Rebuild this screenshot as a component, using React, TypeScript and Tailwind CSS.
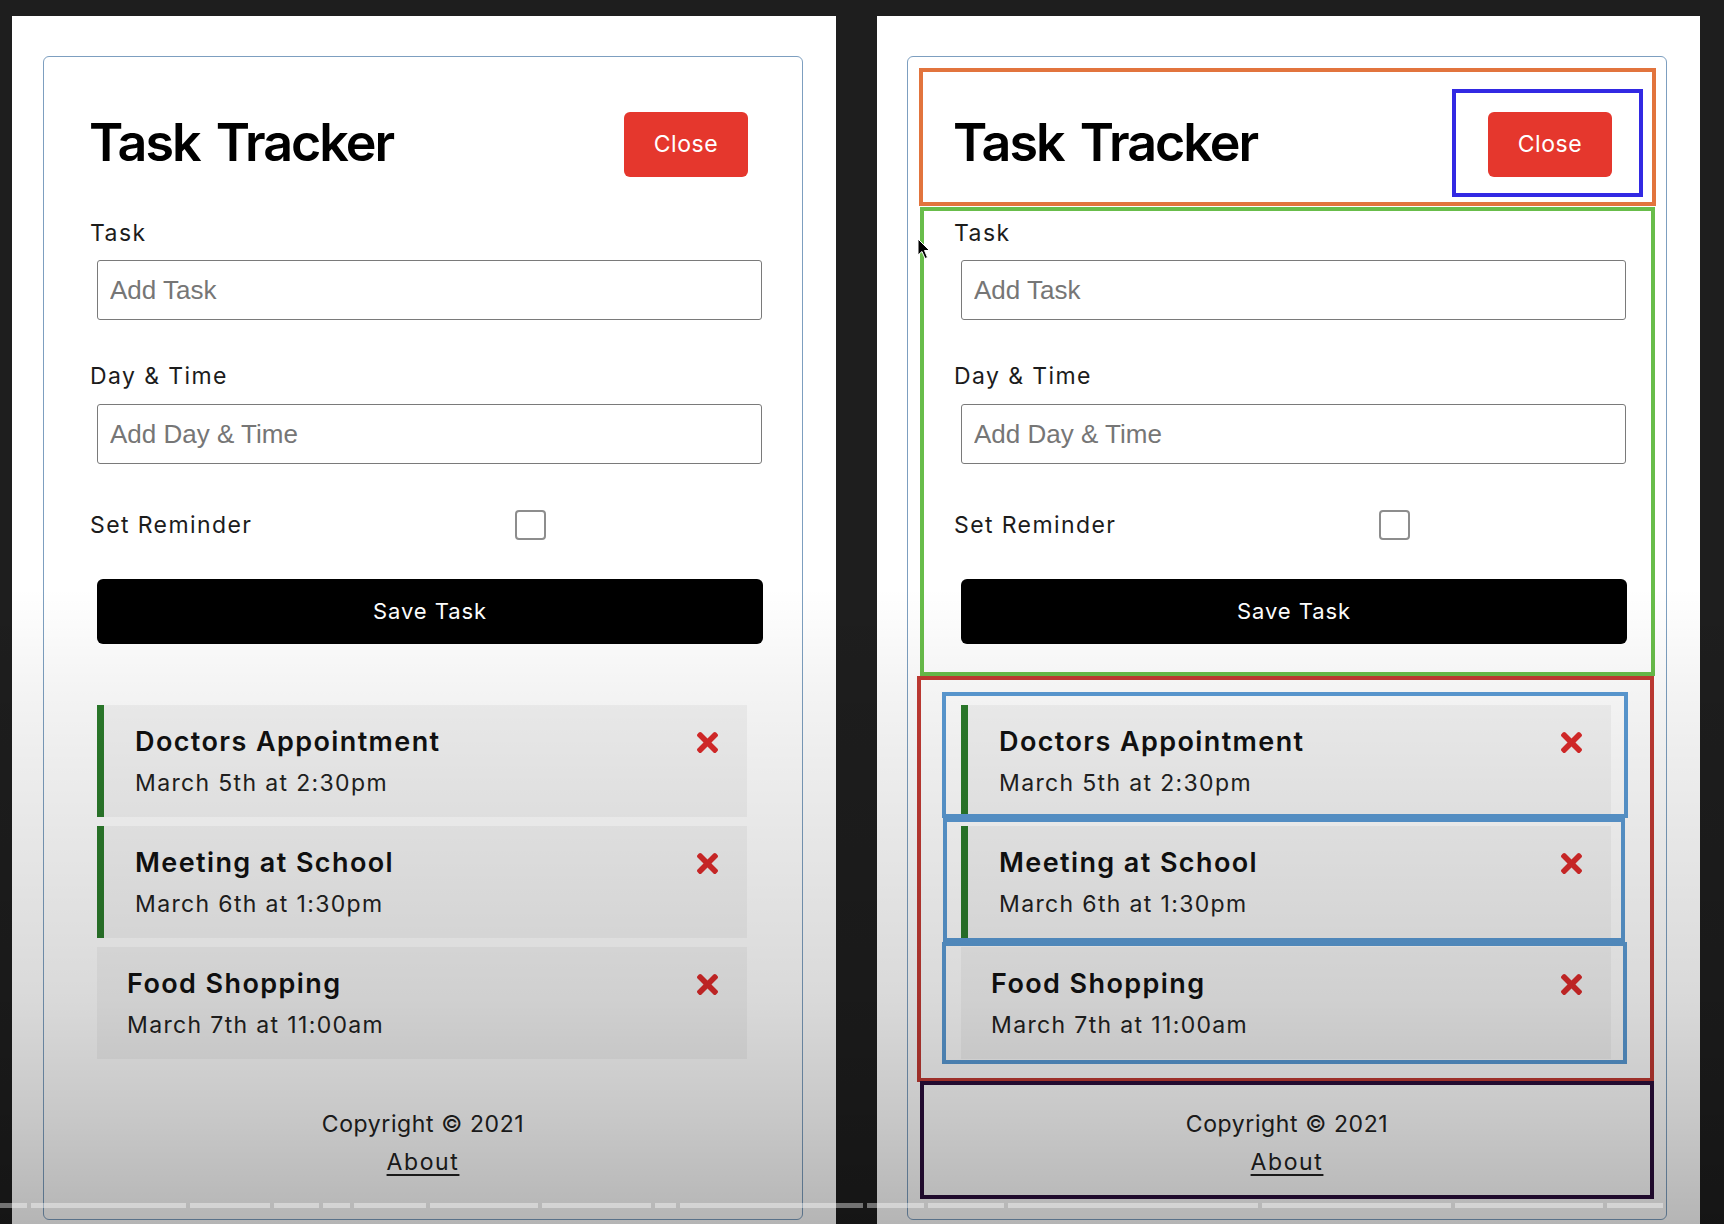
import { useState } from "react";

type Task = { id: number; text: string; day: string; reminder: boolean };

const initialTasks: Task[] = [
  { id: 1, text: "Doctors Appointment", day: "March 5th at 2:30pm", reminder: true },
  { id: 2, text: "Meeting at School", day: "March 6th at 1:30pm", reminder: true },
  { id: 3, text: "Food Shopping", day: "March 7th at 11:00am", reminder: false },
];

// video scrubber segments (px), 4px gaps between
const segments = [27, 155, 80, 45, 27, 72, 108, 109, 21, 183, 57, 76, 250, 189, 148, 56];

const TimesIcon = () => (
  <svg viewBox="0 80 352 352" className="h-[21px] w-[21px] shrink-0 fill-[#dc2a2a]">
    <path d="M242.72 256l100.07-100.07c12.28-12.28 12.28-32.19 0-44.48l-22.24-22.24c-12.28-12.28-32.19-12.28-44.48 0L176 189.28 75.93 89.21c-12.28-12.28-32.19-12.28-44.48 0L9.21 111.45c-12.28 12.28-12.28 32.19 0 44.48L109.28 256 9.21 356.07c-12.28 12.28-12.28 32.19 0 44.48l22.24 22.24c12.28 12.28 32.2 12.28 44.48 0L176 322.72l100.07 100.07c12.28 12.28 32.2 12.28 44.48 0l22.24-22.24c12.28-12.28 12.28-32.19 0-44.48L242.72 256z" />
  </svg>
);

function TaskItem({ task, onDelete }: { task: Task; onDelete: (id: number) => void }) {
  return (
    <div
      className={`ml-[7px] mr-[9px] bg-[#f4f4f4] pb-[18px] pr-[29px] pt-[20px] ${
        task.reminder ? "border-l-[7px] border-[#2b7b2b] pl-[31px]" : "pl-[30px]"
      }`}
    >
      <div className="flex h-[34px] items-center justify-between">
        <h3 className="text-[27px] font-semibold leading-[34px] tracking-[1.4px] text-[#111]">{task.text}</h3>
        <button onClick={() => onDelete(task.id)}>
          <TimesIcon />
        </button>
      </div>
      <p className="mt-[8px] text-[23px] leading-[32px] tracking-[1.35px] text-[#222]">{task.day}</p>
    </div>
  );
}

function TrackerCard() {
  const [tasks, setTasks] = useState<Task[]>(initialTasks);
  const [text, setText] = useState("");
  const [day, setDay] = useState("");
  const [reminder, setReminder] = useState(false);

  return (
    <div className="flex h-[1164px] w-[760px] flex-col rounded-[6px] border border-[#7d9fc0] bg-white px-[46px] pt-[47px]">
      <header className="flex h-[80px] items-center justify-between">
        <h1 className="-ml-[1px] pb-[3px] text-[52px] font-semibold tracking-[-2px] text-black [word-spacing:5px]">
          Task Tracker
        </h1>
        <button className="mr-[8px] h-[65px] w-[124px] rounded-[6px] bg-[#e5372d] text-[23px] tracking-[0.6px] text-white">
          Close
        </button>
      </header>

      <form className="flex flex-col" onSubmit={(e) => e.preventDefault()}>
        <label className="mt-[33px] text-[23px] leading-[33px] tracking-[1.4px] text-[#1c1c1c]">Task</label>
        <input
          value={text}
          onChange={(e) => setText(e.target.value)}
          placeholder="Add Task"
          className="ml-[7px] mt-[10px] h-[60px] w-[665px] rounded-[3px] border border-[#7a7a7a] px-[12px] text-[26px] [font-family:'Liberation_Sans',Arial,sans-serif] outline-none placeholder:text-[#767676]"
        />
        <label className="mt-[40px] text-[23px] leading-[33px] tracking-[1.4px] text-[#1c1c1c]">Day &amp; Time</label>
        <input
          value={day}
          onChange={(e) => setDay(e.target.value)}
          placeholder="Add Day & Time"
          className="ml-[7px] mt-[11px] h-[60px] w-[665px] rounded-[3px] border border-[#7a7a7a] px-[12px] text-[26px] [font-family:'Liberation_Sans',Arial,sans-serif] outline-none placeholder:text-[#767676]"
        />
        <div className="mt-[46px] flex h-[30px] items-center">
          <label className="w-[425px] shrink-0 text-[23px] tracking-[1.4px] text-[#1c1c1c]">Set Reminder</label>
          <button
            type="button"
            onClick={() => setReminder(!reminder)}
            className={`h-[30px] w-[31px] rounded-[4px] border-2 border-[#8d8d8d] ${reminder ? "bg-[#2b7b2b]" : "bg-white"}`}
          />
        </div>
        <button className="ml-[7px] mt-[39px] h-[65px] w-[666px] rounded-[6px] bg-black text-[22px] tracking-[0.9px] text-white">
          Save Task
        </button>
      </form>

      <div className="mt-[61px] flex flex-col gap-[9px]">
        {tasks.map((task) => (
          <TaskItem key={task.id} task={task} onDelete={(id) => setTasks(tasks.filter((t) => t.id !== id))} />
        ))}
      </div>

      <footer className="mt-[46px] flex flex-col items-center text-[23px] leading-[38px] text-[#222]">
        <p className="tracking-[0.6px]">Copyright &copy; 2021</p>
        <a href="#" className="tracking-[1.6px] underline underline-offset-[4px]">
          About
        </a>
      </footer>
    </div>
  );
}

function Box({ className }: { className: string }) {
  return <div className={`pointer-events-none absolute border-4 ${className}`} />;
}

export default function App() {
  return (
    <div className="relative flex h-[1224px] gap-[41px] overflow-hidden bg-[#1e1e1e] pl-[12px] pt-[16px] [font-family:Inter,sans-serif]">
      <div className="h-[1208px] w-[824px] shrink-0 bg-white pl-[31px] pt-[40px]">
        <TrackerCard />
      </div>

      <div className="relative h-[1208px] w-[823px] shrink-0 bg-white pl-[30px] pt-[40px]">
        <TrackerCard />
        {/* devtools-style highlight boxes */}
        <Box className="left-[42px] top-[52px] h-[138px] w-[737px] border-[#e2743d]" />
        <Box className="left-[575px] top-[73px] h-[108px] w-[191px] border-[#3229e3]" />
        <Box className="left-[43px] top-[191px] h-[469px] w-[735px] border-[#68bd4a]" />
        <Box className="left-[40px] top-[660px] h-[406px] w-[737px] border-[#c23a33]" />
        <Box className="left-[65px] top-[676px] h-[126px] w-[686px] border-[#5b9bd5]" />
        <Box className="left-[66px] top-[802px] h-[124px] w-[682px] border-[#5b9bd5]" />
        <Box className="left-[65px] top-[926px] h-[122px] w-[685px] border-[#5b9bd5]" />
        <Box className="left-[43px] top-[1065px] h-[118px] w-[734px] border-[#2b0e3c]" />
        <svg viewBox="0 0 14 22" className="pointer-events-none absolute left-[40px] top-[222px] h-[22px] w-[14px]">
          <path d="M1 1 L1 17 L5 13.5 L8 20.5 L10.5 19.5 L7.5 12.5 L12.5 12.5 Z" fill="#000" stroke="#fff" strokeWidth="1" />
        </svg>
      </div>

      {/* video player shade */}
      <div className="pointer-events-none absolute inset-0 bg-[linear-gradient(to_bottom,transparent_48%,rgba(0,0,0,0.05)_57.6%,rgba(0,0,0,0.09)_67%,rgba(0,0,0,0.15)_81.7%,rgba(0,0,0,0.22)_91.5%,rgba(0,0,0,0.29)_100%)]" />
      <div className="pointer-events-none absolute left-0 right-0 top-[1203px] flex h-[5px] gap-[4px]">
        {segments.map((w, i) => (
          <div key={i} className="h-full shrink-0 bg-white/40" style={{ width: w }} />
        ))}
      </div>
    </div>
  );
}
